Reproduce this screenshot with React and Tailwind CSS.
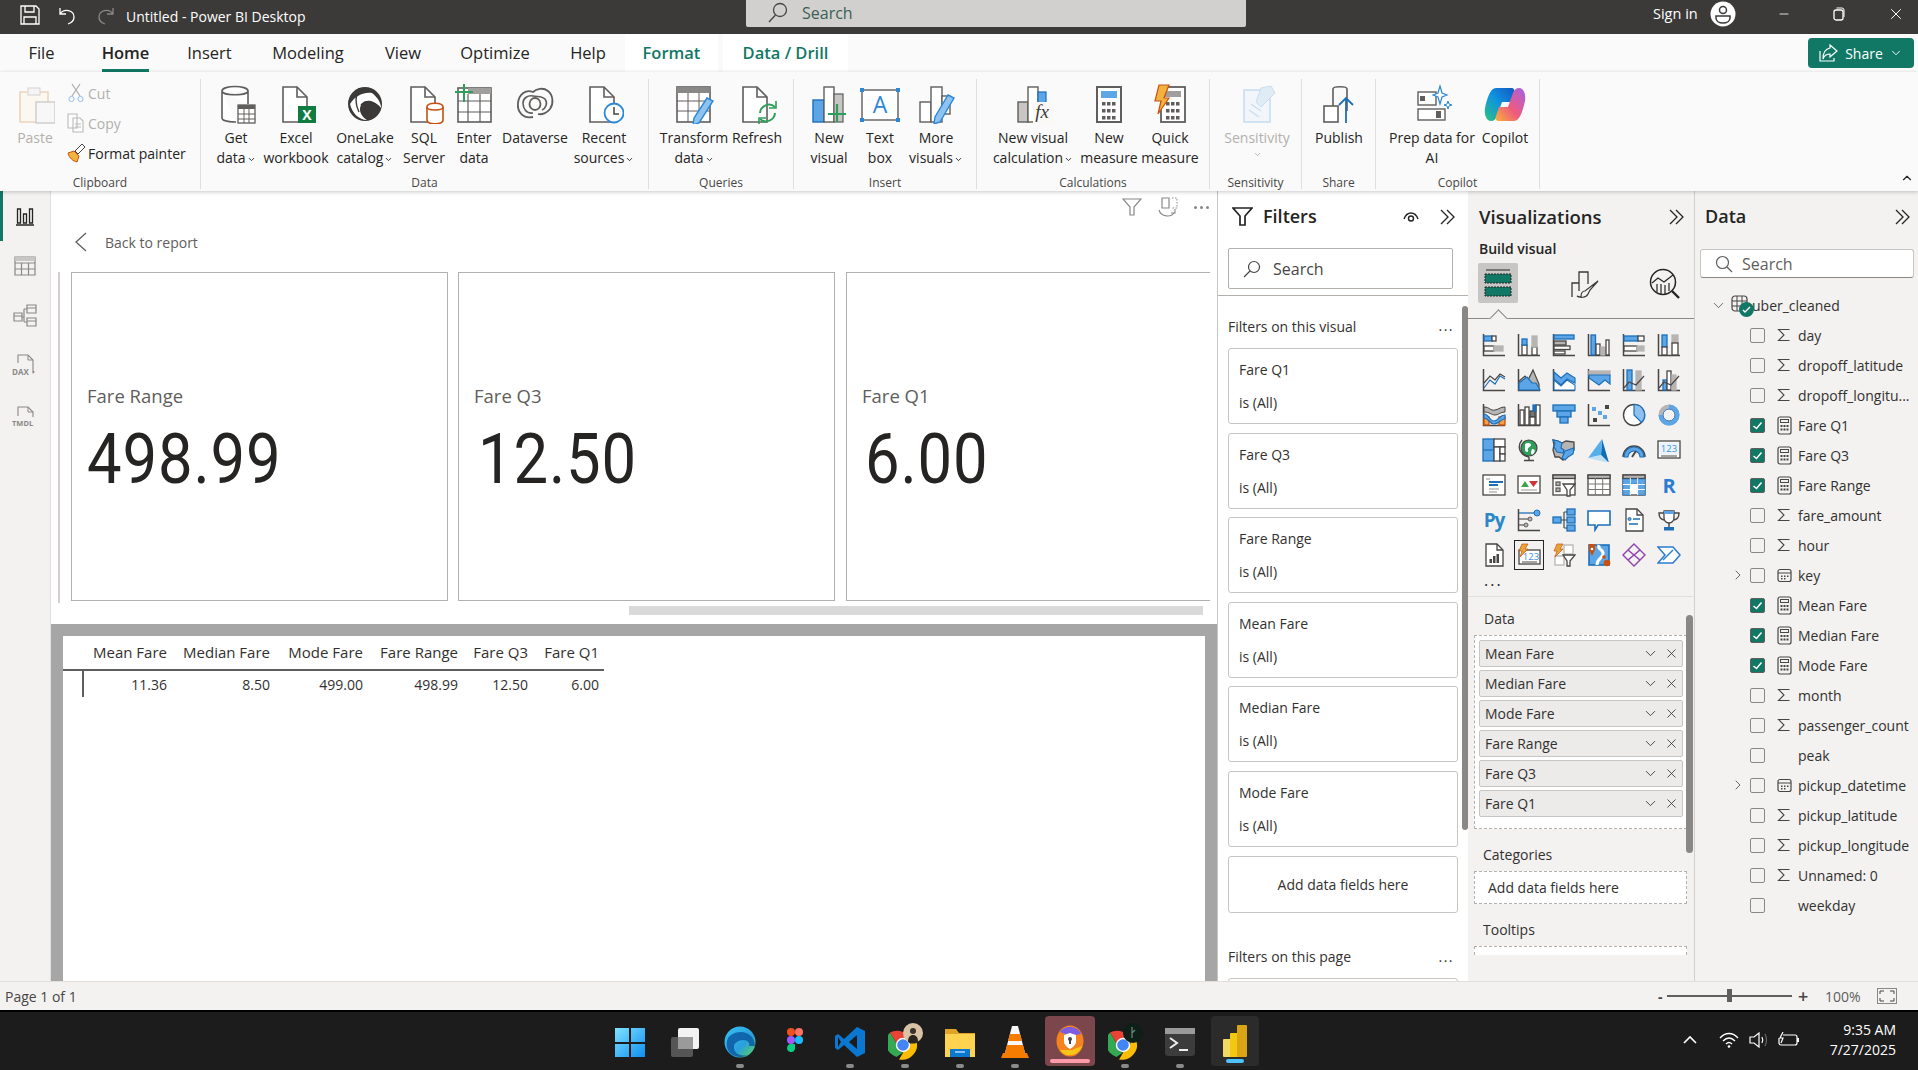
import React from 'react';
import { ChevronDown, ChevronRight, X, Minus } from 'lucide-react';

const D = '#484644', G = '#b7b5b3', B = '#5ca6e8', BD = '#1c6fb8', W = '#ffffff', S = '#605e5c';
const r = (x, y, w, h, f = 'none', s = D, sw = 1.3) => <rect x={x} y={y} width={w} height={h} fill={f} stroke={s} strokeWidth={sw} />;
const p = (d, s = D, sw = 1.4, f = 'none') => <path d={d} stroke={s} strokeWidth={sw} fill={f} />;

function I24({ children }) {
  return <svg width="24" height="24" viewBox="0 0 24 24" fill="none">{children}</svg>;
}
function I40({ children, disabled }) {
  return <svg width="40" height="40" viewBox="0 0 40 40" fill="none" className={disabled ? 'opacity-40' : ''}>{children}</svg>;
}
const axis = p('M1.5 1v21.5H23', D, 1.5);

const vizIcons = [
  <>{axis}{r(2, 3, 8, 5, B, BD)}{r(10, 3, 4, 5, W)}{r(2, 13, 10, 5, W)}{r(12, 13, 9, 5, G, G)}</>,
  <>{axis}{r(5, 12, 5, 10, W)}{r(5, 6, 5, 6, B, BD)}{r(15, 14, 5, 8, W)}{r(15, 3, 5, 11, G, G)}</>,
  <>{p('M1.5 1v21.5H23', D, 1.5)}{r(2, 2, 20, 4, B, BD)}{r(2, 8, 12, 4, G, D)}{r(2, 13, 16, 3.5, W)}{r(2, 18, 11, 3, W)}</>,
  <>{axis}{r(4, 2, 4.5, 20, B, BD)}{r(9, 11, 4, 11, W)}{r(14, 14, 4, 8, G, G)}{r(19, 7, 3, 15, W)}</>,
  <>{axis}{r(2, 3, 14, 5, B, BD)}{r(16, 3, 6, 5, W)}{r(2, 13, 13, 5, W)}{r(15, 13, 7, 5, G, G)}</>,
  <>{axis}{r(5, 2, 5, 12, B, BD)}{r(5, 14, 5, 8, W)}{r(15, 2, 6, 8, G, G)}{r(15, 10, 6, 12, W)}</>,
  <>{axis}{p('M2 15l6-7 5 4 5-6 5 3', D, 1.2)}{p('M2 20l6-8 5 4 5-8 5 3', BD, 1.2)}</>,
  <>{axis}{p('M2 22V13l6-5 3 4 5-10 6 14v6z', D, 1.2, G)}{p('M2 22v-7l8-6 5 6 4 0 4 7z', BD, 1.2, B)}</>,
  <>{axis}{p('M2 4l7 6 6-5 8 5v5l-8-4-6 6-7-6z', BD, 1.2, B)}{p('M2 12l7 6 6-6 8 5v5H2z', BD, 1.1, W)}</>,
  <>{axis}{r(2, 3, 21, 4, G, G)}{p('M2 7h21v9l-5-4-6 5-10-7z', BD, 1.2, B)}</>,
  <>{axis}{r(5, 2, 5, 20, B, BD)}{r(14, 3, 5, 19, G, G)}{p('M2 20l5-6 7 3 8-9', D, 1.2)}</>,
  <>{axis}{r(6, 12, 4, 10, B, BD)}{r(10, 3, 4, 19, W)}{r(15, 7, 4, 15, G, G)}{p('M2 20l5-6 7 3 8-9', D, 1.2)}</>,
  <>{axis}{p('M2 4c6 0 6 4 11 3s5-3 10-3v5c-5 0-6 3-10 3S8 9 2 9z', D, 1, G)}{r(2, 14, 5, 8, '#f59e42', '#ca5010')}{r(17, 14, 6, 8, '#f59e42', '#ca5010')}{p('M2 11c5 0 5 7 10 7s5-6 11-6v4c-5 0-6 5-11 5S7 15 2 15z', BD, 1.2, B)}</>,
  <>{axis}{r(3, 7, 4, 15, W)}{r(8, 4, 4, 18, W)}{r(13, 8, 5, 6, '#787674', D)}{r(19, 2, 4, 20, W)}{r(13, 14, 5, 8, W)}{r(16, 2, 3, 6, BD, BD)}</>,
  <>{r(1, 2, 22, 6, B, BD)}{r(5, 8, 14, 6, B, BD)}{r(8, 14, 8, 6, B, BD)}</>,
  <>{axis}<rect x="5" y="4" width="4" height="4" fill={B} /><rect x="18" y="2" width="4" height="4" fill={D} /><rect x="11" y="8" width="4" height="4" fill={B} /><rect x="6" y="15" width="4" height="4" fill={D} /><rect x="16" y="12" width="4" height="4" fill={B} /></>,
  <><circle cx="12" cy="12" r="10.5" fill={W} stroke={D} strokeWidth="1.4" />{p('M12 1.5a10.5 10.5 0 0 1 7.5 18L12 12z', BD, 1.2, '#8cc0ee')}</>,
  <><circle cx="12" cy="12" r="8.5" stroke="#b7b5b3" strokeWidth="4" />{p('M3.5 12a8.5 8.5 0 1 0 8.5-8.5', B, 4)}<circle cx="12" cy="12" r="6" stroke={BD} strokeWidth="1" /></>,
  <>{r(1, 1, 11, 22, B, BD)}{r(12, 1, 11, 8, W, D)}{r(12, 9, 6, 14, W, D)}{r(18, 9, 5, 7, W, D)}{r(18, 16, 5, 7, W, D)}<path d="M1 12h11" stroke={BD} strokeWidth="1.2" /></>,
  <><circle cx="12" cy="10" r="8" fill="#2e9e5b" stroke={D} strokeWidth="1.2" /><path d="M8 6c3-2 6-1 6 1s-4 2-3 5-3 2-3 0z M15 11c2 0 4 1 2 4s-3 1-3-1z" fill="#fff" />{p('M5 2c-5 6-3 15 7 17M12 19v3M7 22.5h10', D, 1.4)}</>,
  <>{p('M1 2l5 1 4 2 4-2 8 1v8l-3 4-5 2-3 4-4-3-4 0-2-7 1-5z', D, 1.3, G)}{p('M1 2l5 1 4 2-1 5 3 2-1 3-6-1-3-5 1-4z', BD, 1.2, B)}{p('M13 13l9-3-1 6-5 3-3 3-3-2z', BD, 1.2, B)}</>,
  <><path d="M15 1L22 25 14 17z" fill="#0e6cb8" /><path d="M15 1L1 20l13-3z" fill="#55b0ea" /><path d="M1 20l13-3 8 8z" fill="#a8d7f5" opacity=".7" /></>,
  <>{p('M1 19a11 11 0 0 1 22 0', D, 1.4)}{p('M2 19h4a6 6 0 0 1 12 0h4a10 10 0 0 0-20 0z', BD, 1.1, B)}{p('M10 19l4-6', D, 2)}</>,
  <>{r(1, 3, 22, 17, W, D)}{r(3, 5, 18, 11, '#eaf3fb', '#eaf3fb')}<text x="12" y="14" fontSize="9.5" textAnchor="middle" fill="#3f8fdc" fontFamily="Open Sans, sans-serif">123</text>{p('M4 18h16', D, 1)}</>,
  <>{r(1, 2, 22, 20, W, D)}{p('M4 6h4', G, 1.5)}{p('M7 9h14M7 12h9', BD, 1.8)}{p('M7 16h10M7 19h8', G, 1.5)}</>,
  <>{r(1, 3, 22, 17, W, D)}<path d="M4 14l4-6 4 6z" fill="#3fa34d" /><path d="M12 8h9l-4.5 6z" fill="#d13438" />{p('M4 17h16', G, 1.4)}</>,
  <>{r(1, 2, 22, 20, W, D)}{r(1, 2, 22, 3.5, G, D)}{r(4, 9, 4, 3.5, G, S)}{r(4, 15, 4, 3.5, G, S)}<path d="M11 11h12l-5 6v6h-3v-6z" fill="#fff" stroke={D} strokeWidth="1.3" /></>,
  <>{r(1, 2, 22, 20, W, D)}{r(1, 2, 22, 3.5, G, D)}{p('M1 11h22M1 16.5h22M8.3 5v17M15.7 5v17', '#787674', 1)}</>,
  <>{r(1, 2, 22, 20, W, D)}{r(1, 2, 22, 3.5, G, D)}{r(1, 6, 7, 16, B, BD, 0.5)}{r(16, 6, 7, 16, B, BD, 0.5)}{r(8, 6, 8, 5, B, BD, 0.5)}{p('M1 11.5h22M1 16.5h22M8.3 5v17M15.7 5v17', W, 1)}</>,
  <text x="12" y="20" fontSize="20" fontWeight="700" textAnchor="middle" fill="#2b7cd3" fontFamily="Open Sans, sans-serif">R</text>,
  <text x="12" y="19" fontSize="19" fontWeight="700" textAnchor="middle" fill="#2b88c8" fontFamily="Open Sans, sans-serif" letterSpacing="-1">Py</text>,
  <>{axis}{p('M2 5h15', BD, 1.3)}<circle cx="20" cy="5" r="3" fill={B} stroke={BD} />{p('M2 11h10', S, 1.3)}<circle cx="13" cy="11" r="2" fill={G} stroke={S} />{p('M2 17h6', S, 1.3)}<circle cx="9" cy="17" r="2" fill={G} stroke={S} /></>,
  <>{r(1, 9, 8, 6, B, BD)}{r(15, 1, 8, 6, B, BD)}{r(15, 9, 8, 6, B, BD)}{r(15, 17, 8, 6, B, BD)}{p('M9 12h3M12 4v16M12 4h3M12 12h3M12 20h3', D, 1.2)}</>,
  <>{p('M1 3h22v14H11l-3 5v-5H1z', BD, 1.6, W)}</>,
  <>{p('M4 1h11l6 6v16H4z', D, 1.3, W)}{p('M15 1v6h6', D, 1.3)}<circle cx="7.5" cy="11" r="1.5" fill={B} stroke={BD} />{p('M11 11h7M7 16h9', BD, 1.4)}</>,
  <>{p('M7 3h10v7a5 5 0 0 1-10 0z', D, 1.3, W)}<rect x="7" y="3" width="10" height="3" fill={B} />{p('M7 5H2c0 5 2 6 5 7M17 5h5c0 5-2 6-5 7M12 15v4', D, 1.4)}<rect x="7" y="19" width="10" height="3.5" fill={BD} /></>,
  <>{p('M4 1h11l6 6v16H4z', D, 1.3, W)}{p('M15 1v6h6', D, 1.3)}<rect x="7.5" y="16" width="2.5" height="4" fill={D} /><rect x="11" y="13" width="2.5" height="7" fill={D} /><rect x="14.5" y="11" width="2.5" height="9" fill={D} /></>,
  <>{r(2, 7, 21, 14, W, D)}<text x="14" y="17" fontSize="9.5" textAnchor="middle" fill="#3f8fdc" fontFamily="Open Sans, sans-serif">123</text>{p('M5 19h15', D, 1)}<path d="M5 1h6L8 6h3L3 14l2-6H2z" fill="#e8a33a" stroke="#ca5010" strokeWidth=".7" /></>,
  <>{r(12, 2, 9, 9, W, G)}{r(3, 13, 9, 9, W, G)}<path d="M11 12h12l-5 6v5h-3v-5z" fill="#fff" stroke={D} strokeWidth="1.3" /><path d="M5 1h6L8 6h3L3 14l2-6H2z" fill="#e8a33a" stroke="#ca5010" strokeWidth=".7" /></>,
  <>{r(2, 2, 20, 20, B, BD, 1.6)}{p('M12 2c-2 5 5 4 4 9s-6 4-6 11', W, 3)}<path d="M2 1h6v6l-3 6-3-6z" fill="#ca5010" /><circle cx="5" cy="6" r="1.3" fill="#fff" /><circle cx="20" cy="20" r="3.3" fill="#ca5010" /><circle cx="17" cy="14" r="1.8" fill="#ca5010" /></>,
  <>{p('M12 1l6 6-6 5-6-5zM12 12l6 5-6 6-6-6zM6 7l6 5-6 5-5-5zM18 7l5 5-5 5-6-5z', '#8e44ad', 1.4)}</>,
  <>{p('M1 4h15l7 8-7 8H1l7-8z', '#2b7cd3', 1.5, W)}{p('M6 17l10-10', '#2b7cd3', 1.5)}</>,
];

function Tab({ className, label, active, green }) {
  return (
    <div className={`${className} h-full flex justify-center ${green ? 'bg-white' : ''}`}>
      <span className={`h-full flex items-center text-[16.5px] ${green ? 'font-semibold text-[#117865]' : active ? 'font-semibold text-[#252423] border-b-[3px] border-[#117865] pt-[3px]' : 'text-[#252423]'}`}>{label}</span>
    </div>
  );
}

function Group({ className, label, children, pl = 'pl-[8px]' }) {
  return (
    <div className={`${className} h-full border-r border-[#e1dfdd] flex flex-col`}>
      <div className={`flex-1 flex items-start pt-[5px] ${pl}`}>{children}</div>
      <div className="h-[13px] flex items-center justify-center text-[12px] text-[#484644]">{label}</div>
    </div>
  );
}

function Item({ className, icon, l1, l2, caret, disabled }) {
  const c = disabled ? 'text-[#b3b0ad]' : 'text-[#252423]';
  return (
    <div className={`${className} flex flex-col items-center ${c} text-[14px] leading-[20px] whitespace-nowrap shrink-0`}>
      <div className="h-[40px] mb-[4px]">{icon}</div>
      <div>{l1}</div>
      {(l2 || caret) && (
        <div className="flex items-center gap-[1px]">
          <span>{l2}</span>
          {caret && <ChevronDown size={9} strokeWidth={2.4} className="mt-[2px]" />}
        </div>
      )}
    </div>
  );
}

const doc = (x = 7) => <>{p(`M${x} 3h14l10 10v25H${x}z`, S, 1.6, W)}{p(`M${x + 14} 3v10h10`, S, 1.6)}</>;

const icons = {
  paste: <I40 disabled><path d="M5 8h28v30H5z" fill="#fdf3e4" stroke="#d8a060" strokeWidth="1.6" /><rect x="13" y="4" width="12" height="7" fill="#eee" stroke="#999" /><rect x="21" y="18" width="19" height="21" fill="#f4f4f4" stroke="#888" strokeWidth="1.4" /></I40>,
  get: <I40>{p('M6 7c0-6 26-6 26 0v13M6 7c0 5 26 5 26 0M6 7v27c0 3 8 4 14 4', S, 1.6, W)}{r(22, 21, 17, 18, W, S, 1.3)}<rect x="22" y="21" width="17" height="4" fill={S} />{p('M22 30h17M22 35h17M28 25v14M33 25v14', S, 1)}</I40>,
  excel: <I40>{doc(7)}<rect x="22" y="22" width="18" height="17" fill="#107c41" /><text x="31" y="36" textAnchor="middle" fontSize="14" fontWeight="700" fill="#fff" fontFamily="Open Sans, sans-serif">X</text></I40>,
  lake: <I40><circle cx="20" cy="20" r="17" fill="#3b3a39" /><path d="M5 20c6-9 14-12 22-11 5 4 9 9 9 15-8-9-16-9-20-3-3 6 1 12 6 15-8 0-15-7-17-16z" fill="#fff" /><path d="M16 21c5-5 12-4 19 3" stroke="#3b3a39" strokeWidth="1.6" /><path d="M14 4c-4 8-4 16 0 24" stroke="#3b3a39" strokeWidth="1.4" /></I40>,
  sql: <I40>{doc(7)}<path d="M23 23c0-5 16-5 16 0v13c0 5-16 5-16 0z" fill="#fff" stroke="#ca5010" strokeWidth="1.6" /><path d="M23 23c0 4 16 4 16 0" stroke="#ca5010" strokeWidth="1.6" /></I40>,
  enter: <I40>{r(4, 4, 33, 34, W, S, 1.6)}<rect x="14" y="4" width="23" height="6" fill="#a19f9d" />{p('M4 17h33M4 28h33M14 10v28M26 10v28', S, 1.2)}{p('M10 0v18M1 8h18', '#2e9e5b', 2)}</I40>,
  verse: <I40><path d="M18 33C8 35 2 28 3 19 4 10 11 5 18 8c3-3 10-5 15-1 5 4 6 12 2 18-3 4-8 6-12 5" stroke={S} strokeWidth="1.8" /><path d="M18 29C11 30 8 24 8 19s5-8 10-7c5 1 9 0 12 3 3 4 1 9-3 11" stroke={S} strokeWidth="1.6" /><ellipse cx="20" cy="20" rx="5.5" ry="6" stroke={S} strokeWidth="1.8" /></I40>,
  recent: <I40>{doc(6)}<circle cx="30" cy="29" r="9.5" fill="#fff" stroke="#2b88d8" strokeWidth="1.8" />{p('M30 23v7h5', '#484644', 1.5)}</I40>,
  transform: <I40>{r(3, 3, 33, 35, W, S, 1.6)}<rect x="3" y="3" width="33" height="6" fill="#8a8886" />{p('M3 17h33M3 27h33M14 9v29M25 9v29', S, 1)}<path d="M33 14l6 3-14 22-6 2 1-7z" fill="#8ec3ef" stroke="#2b88d8" strokeWidth="1.4" /></I40>,
  refresh: <I40>{doc(6)}<path d="M23 29a9 9 0 0 1 15-6M38 29a9 9 0 0 1-15 6" stroke="#2e9e5b" strokeWidth="2" fill="none" /><path d="M39 17v7h-7M22 41v-7h7" stroke="#2e9e5b" strokeWidth="1.6" fill="none" /></I40>,
  newVisual: <I40>{r(4, 16, 11, 22, '#5ca6e8', '#1c6fb8', 1.4)}{r(15, 3, 10, 35, W, S, 1.4)}{r(25, 10, 9, 28, '#c8c6c4', S, 1.2)}{p('M28 20v18M19 30h18', '#2e9e5b', 2.2)}</I40>,
  textBox: <I40>{r(2, 6, 36, 30, W, S, 1.4)}<rect x="0" y="4" width="4" height="4" fill="#2b88d8" /><rect x="36" y="4" width="4" height="4" fill="#2b88d8" /><rect x="0" y="34" width="4" height="4" fill="#2b88d8" /><rect x="36" y="34" width="4" height="4" fill="#2b88d8" /><text x="20" y="29" textAnchor="middle" fontSize="23" fill="#2b88d8" fontFamily="Open Sans, sans-serif">A</text></I40>,
  moreVisuals: <I40>{r(4, 18, 11, 20, W, S, 1.4)}{r(15, 3, 11, 35, W, S, 1.4)}{r(26, 12, 8, 18, W, S, 1.4)}<path d="M32 11l6 3-14 24-6 2 1-7z" fill="#8ec3ef" stroke="#2b88d8" strokeWidth="1.4" /></I40>,
  calc: <I40>{r(5, 18, 10, 20, '#c8c6c4', S, 1.4)}{r(15, 3, 10, 35, W, S, 1.4)}{r(25, 8, 8, 14, '#5ca6e8', '#1c6fb8', 1.2)}<rect x="20" y="18" width="20" height="22" fill="#faf9f8" /><text x="29" y="34" textAnchor="middle" fontSize="19" fontStyle="italic" fill="#3b3a39" fontFamily="Liberation Serif, serif">fx</text></I40>,
  measure: <I40>{r(8, 3, 24, 35, W, S, 2)}<rect x="12" y="7" width="16" height="7" fill="#5ca6e8" />{[18, 25, 32].map((y) => [13, 18, 23].map((x) => <rect key={x + '-' + y} x={x} y={y} width="3.5" height="3.5" fill={S} />))}</I40>,
  quick: <I40>{r(11, 3, 24, 35, W, S, 1.8)}<rect x="15" y="7" width="16" height="6" fill="#a19f9d" />{[18, 25, 32].map((y) => [16, 21, 26].map((x) => <rect key={x + '-' + y} x={x} y={y} width="3.5" height="3.5" fill={S} />))}<path d="M9 1h10l-5 13h5L8 30l3-13H5z" fill="#f2b23e" stroke="#ca5010" strokeWidth="1.2" /></I40>,
  sens: <I40 disabled><rect x="7" y="6" width="26" height="32" fill="#e8f2fb" stroke="#7fb3e0" strokeWidth="1.6" /><path d="M24 4l10-2 4 7-14 14-5-5z" fill="#b9d8f2" stroke="#7fb3e0" />{p('M12 26l10 7M14 20l10 7', '#7fb3e0', 1.4)}</I40>,
  publish: <I40>{r(5, 22, 14, 16, W, S, 1.6)}{p('M14 22V5c0-3 14-3 14 0v22', S, 1.6)}{p('M27 39V14M20 21l7-7 7 7', '#1c6fb8', 1.8)}</I40>,
  prep: <I40>{r(6, 8, 18, 13, W, S, 1.4)}<rect x="8" y="12" width="5" height="5" fill={S} />{r(6, 25, 27, 11, W, S, 1.4)}<rect x="24" y="27" width="5" height="7" fill={S} /><path d="M28 2l2 7 5 2-5 2-2 7-2-7-5-2 5-2z" fill="#fff" stroke="#2b88d8" strokeWidth="1.2" /><path d="M36 17l1 3 3 1-3 1-1 3-1-3-3-1 3-1z" fill="#fff" stroke="#2b88d8" /></I40>,
  copilot: (
    <svg width="42" height="40" viewBox="0 0 42 40" fill="none">
      <defs>
        <linearGradient id="cpa" x1="0" y1="1" x2="1" y2="0"><stop offset="0" stopColor="#2ec27e" /><stop offset=".5" stopColor="#0f94e0" /><stop offset="1" stopColor="#1257c4" /></linearGradient>
        <linearGradient id="cpb" x1="0" y1="1" x2="1" y2="0"><stop offset="0" stopColor="#f8b13a" /><stop offset=".45" stopColor="#ef5a7c" /><stop offset="1" stopColor="#a560e8" /></linearGradient>
      </defs>
      <path d="M12 4h15c3 0 4 2 3 5l-3 9h-9l-5 14c-1 3-3 5-6 5-5 0-7-7-6-13 2-9 5-20 11-20z" fill="url(#cpa)" />
      <path d="M30 37H15c-3 0-4-2-3-5l3-9h9l5-14c1-3 3-5 6-5 5 0 7 7 6 13-2 9-5 20-11 20z" fill="url(#cpb)" />
    </svg>
  ),
};

function Small({ icon, label, disabled }) {
  return (
    <div className={`h-[30px] flex items-center whitespace-nowrap text-[14px] ${disabled ? 'text-[#b3b0ad]' : 'text-[#252423]'}`}>
      <div className="w-[24px] flex justify-center">{icon}</div>
      <span>{label}</span>
    </div>
  );
}

const Dbl = () => (
  <svg width="16" height="16" viewBox="0 0 16 16" fill="none"><path d="M2 1l7 7-7 7M8 1l7 7-7 7" stroke="#252423" strokeWidth="1.3" /></svg>
);

function FilterCard({ name }) {
  return (
    <div className="h-[76px] mb-[8.6px] mr-[10px] bg-white border border-[#c8c6c4] rounded-[3px] pl-[10px] pt-[11px] text-[14px] text-[#323130] leading-[20px] shrink-0">
      <div>{name}</div>
      <div className="mt-[13px]">is (All)</div>
    </div>
  );
}

function Pill({ name, mb }) {
  return (
    <div className={`h-[27px] ${mb} bg-[#edebe9] border border-[#c8c6c4] rounded-[2px] flex items-center pl-[5px] pr-[3px] text-[14px] text-[#323130]`}>
      <span className="flex-1">{name}</span>
      <ChevronDown size={17} strokeWidth={1.2} className="mr-[5px]" />
      <X size={15} strokeWidth={1.3} />
    </div>
  );
}

const Sigma = () => <svg width="14" height="14" viewBox="0 0 14 14" fill="none"><path d="M12.5 1.5H1.5L7 7l-5.5 5.5h11" stroke="#484644" strokeWidth="1.1" /></svg>;
const CalcI = () => <svg width="15" height="19" viewBox="0 0 15 19" fill="none"><rect x="1" y="1" width="13" height="17" rx="2" stroke="#484644" strokeWidth="1.2" /><rect x="3.5" y="3.5" width="8" height="3" stroke="#484644" /><g fill="#484644"><rect x="3.5" y="9" width="2" height="2" /><rect x="6.5" y="9" width="2" height="2" /><rect x="9.5" y="9" width="2" height="2" /><rect x="3.5" y="12.5" width="2" height="2" /><rect x="6.5" y="12.5" width="2" height="2" /><rect x="9.5" y="12.5" width="2" height="2" /></g></svg>;
const CalI = () => <svg width="15" height="15" viewBox="0 0 15 15" fill="none"><rect x="1" y="1.5" width="13" height="12" rx="2" stroke="#484644" strokeWidth="1.2" /><path d="M1 5h13" stroke="#484644" /><g fill="#484644"><rect x="4" y="7.5" width="1.5" height="1.5" /><rect x="7" y="7.5" width="1.5" height="1.5" /><rect x="10" y="7.5" width="1.5" height="1.5" /><rect x="4" y="10" width="1.5" height="1.5" /><rect x="7" y="10" width="1.5" height="1.5" /></g></svg>;

function Row({ name, icon, checked, expand }) {
  return (
    <div className="h-[30px] shrink-0 flex items-center text-[14px] text-[#323130] whitespace-nowrap">
      <div className="w-[55px] pl-[35px] flex justify-start">{expand && <ChevronRight size={16} strokeWidth={1.2} className="text-[#484644]" />}</div>
      {checked ? (
        <div className="w-[15px] h-[15px] rounded-[2px] bg-[#117865] border border-[#605e5c] flex items-center justify-center">
          <svg width="11" height="11" viewBox="0 0 11 11" fill="none"><path d="M1.5 6l3 2.5 5-6" stroke="#fff" strokeWidth="1.5" /></svg>
        </div>
      ) : (
        <div className="w-[15px] h-[15px] rounded-[2px] border border-[#8a8886]" />
      )}
      <div className="w-[36px] pl-[2px] flex justify-center">{icon === 's' ? <Sigma /> : icon === 'c' ? <CalcI /> : icon === 't' ? <CalI /> : null}</div>
      <span className="-ml-[3px]">{name}</span>
    </div>
  );
}

const rows = [
  ['day', 's'], ['dropoff_latitude', 's'], ['dropoff_longitu...', 's'], ['Fare Q1', 'c', 1], ['Fare Q3', 'c', 1], ['Fare Range', 'c', 1],
  ['fare_amount', 's'], ['hour', 's'], ['key', 't', 0, 1], ['Mean Fare', 'c', 1], ['Median Fare', 'c', 1], ['Mode Fare', 'c', 1],
  ['month', 's'], ['passenger_count', 's'], ['peak', ''], ['pickup_datetime', 't', 0, 1], ['pickup_latitude', 's'], ['pickup_longitude', 's'], ['Unnamed: 0', 's'], ['weekday', ''],
];

function KpiCard({ className, label, value, vx }) {
  return (
    <div className={`${className} shrink-0 h-[329px] border-[1.5px] border-[#b3b0ad] pl-[15px] pt-[109px] bg-white`}>
      <div className="text-[18.5px] leading-[28px] text-[#605e5c]">{label}</div>
      <div className={`${vx} text-[70px] leading-[90px] mt-[4px] text-[#252423] font-['Roboto',sans-serif] origin-left scale-x-[0.88] tracking-[1px]`}>{value}</div>
    </div>
  );
}

const cols = [
  ['Mean Fare', '11.36', 'w-[109px]'], ['Median Fare', '8.50', 'w-[103px]'], ['Mode Fare', '499.00', 'w-[93px]'],
  ['Fare Range', '498.99', 'w-[95px]'], ['Fare Q3', '12.50', 'w-[70px]'], ['Fare Q1', '6.00', 'w-[71px]'],
];

function Task({ children, dot, className = '' }) {
  return (
    <div className={`w-[55px] h-[58px] flex flex-col items-center shrink-0 ${className}`}>
      <div className="h-[44px] mt-[8px] flex items-center justify-center">{children}</div>
      <div className="h-[6px] flex justify-center">{dot && <div className="w-[8px] h-[4px] rounded-full bg-[#8a8a8a]" />}</div>
    </div>
  );
}

const Chrome = ({ badge }) => (
  <svg width="36" height="38" viewBox="0 0 36 38" fill="none" className="ml-[3px]">
    <path d="M15 7a15 15 0 0 1 13 7.5H15a7.5 7.5 0 0 0-6.5 3.8L2 7.5A15 15 0 0 1 15 7z" fill="#ea4335" transform="translate(0 2)" />
    <path d="M2 9.5l6.5 11A7.5 7.5 0 0 0 15 29.5L8.5 34A15 15 0 0 1 2 9.5z" fill="#34a853" />
    <path d="M28 16.5a15 15 0 0 1-17 20l6-10a7.5 7.5 0 0 0 5-10z" fill="#fbbc05" />
    <circle cx="15" cy="22" r="6.5" fill="#4285f4" stroke="#fff" strokeWidth="1.4" />
    {badge === 'a' ? <g><circle cx="25" cy="10" r="10" fill="#d8c4a4" /><path d="M20 19c0-5 2-7 5-7s5 2 5 7c-3 2-7 2-10 0z" fill="#2a2420" /><circle cx="25" cy="8" r="3" fill="#3a3028" /></g> : <g><circle cx="25" cy="10" r="10" fill="#0d1f17" /><path d="M24 4v11M24 10l3-3" stroke="#6a8a7c" strokeWidth="1.2" /></g>}
  </svg>
);

export default function App() {
  return (
    <div className="w-[1918px] h-[1070px] overflow-hidden flex flex-col bg-white font-['Open_Sans',sans-serif]">
      {/* title bar */}
      <div className="h-[34px] shrink-0 bg-[#3b3a39] flex text-white">
        <div className="w-[746px] flex items-center pb-[5px]">
          <svg className="ml-[20px]" width="20" height="20" viewBox="0 0 20 20" fill="none"><path d="M1 1h15l3 3v15H1z" stroke="#fff" strokeWidth="1.3" /><path d="M5 1v6h9V1M4 19v-7h12v7" stroke="#fff" strokeWidth="1.3" /></svg>
          <svg className="ml-[18px]" width="20" height="20" viewBox="0 0 20 20" fill="none"><path d="M2 3v6h6M2 9c4-6 14-4 14 3 0 4-3 6-6 7" stroke="#fff" strokeWidth="1.3" /></svg>
          <svg className="ml-[17px]" width="20" height="20" viewBox="0 0 20 20" fill="none"><path d="M18 3v6h-6M18 9c-4-6-14-4-14 3 0 4 3 6 6 7" stroke="#8a8886" strokeWidth="1.3" /></svg>
          <span className="ml-[11px] text-[14px] pt-[3px]">Untitled - Power BI Desktop</span>
        </div>
        <div className="w-[500px] h-[27px] bg-[#d2d0ce] rounded-b-[2px] flex items-center pl-[21px] text-[#3b5f55] text-[16px] pb-[2px]">
          <svg width="22" height="22" viewBox="0 0 22 22" fill="none"><circle cx="13" cy="8" r="6.5" stroke="#484644" strokeWidth="1.3" /><path d="M8.5 13L2 20" stroke="#484644" strokeWidth="1.4" /></svg>
          <span className="ml-[13px]">Search</span>
        </div>
        <div className="flex-1 flex items-center pl-[407px] text-[14.5px] pb-[6px]">
          <span>Sign in</span>
          <svg className="ml-[12px]" width="26" height="26" viewBox="0 0 26 26" fill="none"><circle cx="13" cy="13" r="12.5" fill="#fff" /><circle cx="13" cy="9" r="3.5" stroke="#3b3a39" strokeWidth="1.5" /><path d="M6 15h14v2c0 3-3 5-7 5s-7-2-7-5z" stroke="#3b3a39" strokeWidth="1.5" /></svg>
          <Minus size={14} strokeWidth={1.4} className="ml-[41px]" />
          <svg className="ml-[42px]" width="12" height="14" viewBox="0 0 12 14" fill="none"><rect x="1" y="3" width="9" height="10" rx="2" stroke="#fff" strokeWidth="1.3" /><path d="M3.5 1H9a2 2 0 0 1 2 2v7" stroke="#fff" /></svg>
          <X size={18} strokeWidth={1.3} className="ml-[42px]" />
        </div>
      </div>

      {/* tabs */}
      <div className="h-[38px] shrink-0 bg-[#fafafa] flex items-center pl-[12px]">
        <Tab className="w-[59px]" label="File" />
        <Tab className="w-[109px]" label="Home" active />
        <Tab className="w-[59px]" label="Insert" />
        <Tab className="w-[138px]" label="Modeling" />
        <Tab className="w-[52px]" label="View" />
        <Tab className="w-[132px]" label="Optimize" />
        <Tab className="w-[54px]" label="Help" />
        <Tab className="w-[93px] ml-[10px]" label="Format" green />
        <Tab className="w-[125px] ml-[5px]" label="Data / Drill" green />
        <div className="ml-auto mr-[4px] w-[106px] h-[30px] rounded-[4px] bg-[#117865] text-white text-[14px] flex items-center justify-center gap-[6px]">
          <svg width="20" height="20" viewBox="0 0 20 20" fill="none"><path d="M11 2l7 6-7 6v-3c-4 0-6 2-7 5 0-6 2-10 7-11zM1 8v10h14v-3" stroke="#fff" strokeWidth="1.2" /></svg>
          <span>Share</span>
          <ChevronDown size={14} strokeWidth={1.6} />
        </div>
      </div>

      {/* ribbon */}
      <div className="h-[119px] shrink-0 bg-[#fafafa] pt-[7px] pb-[2px] flex relative z-10 shadow-[0_1px_4px_rgba(0,0,0,0.22)]">
        <Group className="w-[201px]" label="Clipboard" pl="pl-[10px]">
          <div className="w-[50px] flex flex-col items-center text-[14px] leading-[20px] text-[#b3b0ad]">
            <div className="h-[40px] mb-[4px]">{icons.paste}</div>
            <div>Paste</div>
          </div>
          <div className="-mt-[6px] ml-[4px]">
            <Small disabled label="Cut" icon={<svg width="18" height="20" viewBox="0 0 18 20" fill="none" className="opacity-50"><path d="M5 1l8 12M13 1L5 13" stroke="#605e5c" strokeWidth="1.2" /><circle cx="4.5" cy="16" r="2.6" stroke="#2b88d8" /><circle cx="13.5" cy="16" r="2.6" stroke="#2b88d8" /></svg>} />
            <Small disabled label="Copy" icon={<svg width="18" height="20" viewBox="0 0 18 20" fill="none" className="opacity-40"><path d="M1 1h9v14H1zM6 5h7l3 3v11H6z" fill="#fff" stroke="#605e5c" strokeWidth="1.1" /><path d="M8 11h6M8 14h6" stroke="#605e5c" /></svg>} />
            <Small label="Format painter" icon={<svg width="20" height="20" viewBox="0 0 20 20" fill="none"><path d="M2 10l6-2 5 5-2 6C7 18 3 15 2 10z" fill="#f2b23e" stroke="#ca5010" /><path d="M9 8l7-7 3 3-7 7z" fill="#fff" stroke="#484644" /></svg>} />
          </div>
        </Group>
        <Group className="w-[448px]" label="Data" pl="pl-[7px]">
          <Item className="w-[56px]" icon={icons.get} l1="Get" l2="data" caret />
          <Item className="w-[64px]" icon={icons.excel} l1="Excel" l2="workbook" />
          <Item className="w-[74px]" icon={icons.lake} l1="OneLake" l2="catalog" caret />
          <Item className="w-[44px]" icon={icons.sql} l1="SQL" l2="Server" />
          <Item className="w-[56px]" icon={icons.enter} l1="Enter" l2="data" />
          <Item className="w-[66px]" icon={icons.verse} l1="Dataverse" />
          <Item className="w-[72px]" icon={icons.recent} l1="Recent" l2="sources" caret />
        </Group>
        <Group className="w-[145px]" label="Queries" pl="pl-[9px]">
          <Item className="w-[72px]" icon={icons.transform} l1="Transform" l2="data" caret />
          <Item className="w-[54px]" icon={icons.refresh} l1="Refresh" />
        </Group>
        <Group className="w-[183px]" label="Insert" pl="pl-[10px]">
          <Item className="w-[50px]" icon={icons.newVisual} l1="New" l2="visual" />
          <Item className="w-[52px]" icon={icons.textBox} l1="Text" l2="box" />
          <Item className="w-[60px]" icon={icons.moreVisuals} l1="More" l2="visuals" caret />
        </Group>
        <Group className="w-[233px]" label="Calculations">
          <Item className="w-[96px]" icon={icons.calc} l1="New visual" l2="calculation" caret />
          <Item className="w-[56px]" icon={icons.measure} l1="New" l2="measure" />
          <Item className="w-[66px]" icon={icons.quick} l1="Quick" l2="measure" />
        </Group>
        <Group className="w-[92px]" label="Sensitivity" pl="pl-[10px]">
          <Item className="w-[74px]" icon={icons.sens} l1="Sensitivity" caret disabled />
        </Group>
        <Group className="w-[74px]" label="Share">
          <Item className="w-[58px]" icon={icons.publish} l1="Publish" />
        </Group>
        <Group className="w-[164px]" label="Copilot">
          <Item className="w-[96px]" icon={icons.prep} l1="Prep data for" l2="AI" />
          <Item className="w-[50px]" icon={icons.copilot} l1="Copilot" />
        </Group>
        <div className="flex-1 flex items-end justify-end pr-[4px]">
          <ChevronDown size={14} strokeWidth={2} className="rotate-180 mb-[4px] text-[#252423]" />
        </div>
      </div>

      {/* main */}
      <div className="h-[790px] shrink-0 flex">
        {/* rail */}
        <div className="w-[51px] shrink-0 bg-[#f3f2f1] border-r border-[#e1dfdd] flex flex-col">
          <div className="h-[50px] flex items-center justify-center border-l-[3px] border-[#117865] pr-[3px]">
            <svg width="20" height="20" viewBox="0 0 20 20" fill="none"><path d="M1 19h18" stroke="#252423" strokeWidth="1.5" /><path d="M2.5 3h3v14h-3zM8.5 8h3v9h-3zM14.5 3h3v14h-3z" stroke="#252423" strokeWidth="1.3" /></svg>
          </div>
          <div className="h-[50px] flex items-center justify-center">
            <svg width="22" height="20" viewBox="0 0 22 20" fill="none"><path d="M1 1h20v18H1zM1 7h20M1 13h20M7.5 7v12M14.5 7v12" stroke="#8a8886" strokeWidth="1.2" /><rect x="1" y="1" width="20" height="4" fill="#c8c6c4" /></svg>
          </div>
          <div className="h-[50px] flex items-center justify-center">
            <svg width="24" height="24" viewBox="0 0 24 24" fill="none"><path d="M1 9h8v8H1zM1 12h8M14 1h9v8h-9zM14 4h9M14 14h9v8h-9zM14 17h9M9 13h2M11 5v13M11 5h3M11 18h3" stroke="#8a8886" strokeWidth="1.2" /></svg>
          </div>
          <div className="h-[50px] flex items-center justify-center">
            <svg width="26" height="26" viewBox="0 0 26 26" fill="none"><path d="M6 10V2h10l5 5v13c1 0 1-1 1-2" stroke="#8a8886" strokeWidth="1.1" /><path d="M16 2v5h5" stroke="#8a8886" /><text x="0" y="22" fontSize="8" fontWeight="700" fill="#8a8886" fontFamily="Open Sans, sans-serif">DAX</text></svg>
          </div>
          <div className="h-[50px] flex items-center justify-center pt-[3px]">
            <svg width="26" height="26" viewBox="0 0 26 26" fill="none"><path d="M6 11V2h10l5 5v5" stroke="#8a8886" strokeWidth="1.1" /><path d="M16 2v5h5" stroke="#8a8886" /><text x="0" y="21" fontSize="7.5" fontWeight="700" fill="#8a8886" fontFamily="Open Sans, sans-serif">TMDL</text></svg>
          </div>
        </div>

        {/* canvas */}
        <div className="w-[1166px] shrink-0 flex flex-col bg-white relative">
          <div className="h-[32px] flex items-center justify-end pr-[4px] gap-[15px] shrink-0">
            <svg width="20" height="20" viewBox="0 0 20 20" fill="none"><path d="M1 2h18l-7 8v8h-4v-8z" stroke="#8a8886" strokeWidth="1.2" /></svg>
            <svg width="22" height="22" viewBox="0 0 22 22" fill="none"><path d="M5 12V2h7v10z" stroke="#8a8886" strokeWidth="1.2" /><path d="M15 2h5v10h-5" stroke="#8a8886" strokeDasharray="1.5 1.5" /><path d="M2 14c2 7 12 8 16 2M18 13v4h-4" stroke="#8a8886" strokeWidth="1.1" /></svg>
            <div className="flex gap-[3px] items-center w-[19px]">
              <i className="w-[3px] h-[3px] rounded-full bg-[#8a8886]" /><i className="w-[3px] h-[3px] rounded-full bg-[#8a8886]" /><i className="w-[3px] h-[3px] rounded-full bg-[#8a8886]" />
            </div>
          </div>
          <div className="h-[49px] shrink-0 flex items-center pl-[23px] pb-[11px] text-[14px] text-[#605e5c]">
            <svg width="14" height="22" viewBox="0 0 14 22" fill="none"><path d="M12 2L2 11l10 9" stroke="#605e5c" strokeWidth="1.3" /></svg>
            <span className="ml-[17px]">Back to report</span>
          </div>
          <div className="h-[331px] shrink-0 flex pl-[7px] mr-[7px] overflow-hidden">
            <div className="w-[2px] h-[331px] bg-[#d2d0ce] shrink-0 mr-[11px]" />
            <KpiCard className="w-[377px] mr-[10px]" label="Fare Range" value="498.99" vx="" />
            <KpiCard className="w-[377px] mr-[11px]" label="Fare Q3" value="12.50" vx="ml-[4px]" />
            <KpiCard className="w-[377px]" label="Fare Q1" value="6.00" vx="ml-[3px]" />
          </div>
          <div className="h-[21px] shrink-0 pl-[578px] pt-[3px]">
            <div className="w-[574px] h-[9px] bg-[#d9d9d9]" />
          </div>
          <div className="flex-1 min-h-0 bg-[#a6a6a6] pt-[12px] px-[12px]">
            <div className="h-full bg-white">
              <div className="w-[541px]">
                <div className="flex h-[35px] border-b-[2px] border-[#605e5c] items-center text-[15px] text-[#323130] whitespace-nowrap">
                  {cols.map((c) => <div key={c[0]} className={`${c[2]} text-right pr-[5px]`}>{c[0]}</div>)}
                </div>
                <div className="flex h-[26px] items-center text-[14px] text-[#323130] relative">
                  <div className="absolute left-[19px] top-0 w-[1.5px] h-[26px] bg-[#605e5c]" />
                  {cols.map((c) => <div key={c[0]} className={`${c[2]} text-right pr-[5px]`}>{c[1]}</div>)}
                </div>
              </div>
            </div>
          </div>
        </div>

        {/* filters */}
        <div className="w-[251px] shrink-0 bg-white border-l border-[#c8c6c4] flex flex-col relative overflow-hidden">
          <div className="h-[50px] flex items-center pl-[14px] shrink-0 pt-[1px]">
            <svg width="21" height="21" viewBox="0 0 21 21" fill="none"><path d="M1 2h19l-7 8v9h-5v-9z" stroke="#252423" strokeWidth="1.7" /></svg>
            <span className="ml-[10px] text-[18px] font-semibold text-[#252423]">Filters</span>
            <svg className="ml-[86px]" width="16" height="12" viewBox="0 0 16 12" fill="none"><path d="M1 8c3-8 11-8 14 0" stroke="#252423" strokeWidth="1.4" /><circle cx="8" cy="7.5" r="2.5" stroke="#252423" strokeWidth="1.4" /></svg>
            <span className="ml-[20px]"><Dbl /></span>
          </div>
          <div className="pl-[10px] shrink-0 mt-[7px]">
            <div className="w-[225px] h-[41px] border border-[#b3b0ad] rounded-[2px] flex items-center pl-[13px] text-[#484644]">
              <svg width="20" height="20" viewBox="0 0 20 20" fill="none"><circle cx="12" cy="8" r="5.5" stroke="#484644" strokeWidth="1.2" /><path d="M8 12l-6 6" stroke="#484644" strokeWidth="1.3" /></svg>
              <span className="ml-[11px] text-[16px] pt-[1px]">Search</span>
            </div>
          </div>
          <div className="mt-[6px] h-[1px] bg-[#b3b0ad] shrink-0" />
          <div className="pl-[10px] pr-0">
            <div className="h-[52px] flex items-center text-[14px] text-[#323130] justify-between pr-[14px] pt-[17px] pb-[9px]">
              <span>Filters on this visual</span>
              <span className="tracking-[1.5px] -mt-[2px]">...</span>
            </div>
            {['Fare Q1', 'Fare Q3', 'Fare Range', 'Mean Fare', 'Median Fare', 'Mode Fare'].map((n) => <FilterCard key={n} name={n} />)}
            <div className="h-[57px] mr-[10px] mt-[0.5px] bg-white border border-[#c8c6c4] rounded-[3px] flex items-center justify-center text-[14px] text-[#323130]">Add data fields here</div>
            <div className="h-[65px] flex items-end pb-[11px] justify-between text-[14px] text-[#323130] pr-[14px]">
              <span>Filters on this page</span>
              <span className="tracking-[1.5px]">...</span>
            </div>
            <div className="h-[40px] mr-[10px] border border-[#c8c6c4] rounded-[3px]" />
          </div>
          <div className="absolute right-0 top-[115px] w-[6px] h-[524px] rounded-full bg-[#8a8886]" />
        </div>

        {/* visualizations */}
        <div className="w-[226px] shrink-0 bg-[#f3f2f1] flex flex-col relative overflow-hidden">
          <div className="h-[50px] flex items-center pl-[11px] pt-[1px] shrink-0">
            <span className="text-[18.5px] font-semibold text-[#252423] whitespace-nowrap w-[189px]">Visualizations</span>
            <Dbl />
          </div>
          <div className="h-[16px] pl-[11px] text-[14px] leading-[16px] font-semibold text-[#252423] shrink-0">Build visual</div>
          <div className="h-[55px] shrink-0 mt-[6px] flex pl-[10px] items-start">
            <div className="w-[40px] h-[40px] bg-[#c8c6c4] rounded-[2px] flex items-center justify-center">
              <svg width="30" height="30" viewBox="0 0 30 30" fill="none"><path d="M3 2h24" stroke="#252423" strokeWidth="1" /><rect x="2" y="6" width="26" height="9" fill="#117865" stroke="#252423" strokeDasharray="2 1" /><rect x="2" y="19" width="26" height="9" fill="#117865" stroke="#252423" strokeDasharray="2 1" /></svg>
            </div>
            <svg className="ml-[53px] mt-[6px]" width="28" height="30" viewBox="0 0 28 30" fill="none"><path d="M1 28V14h7V3h9v12M8 14v8" stroke="#3b3a39" strokeWidth="1.3" /><path d="M27 12L14 22c-2 0-4 2-4 6-1 0-3 0-4-1 3 2 9 2 11-2l2-4z" fill="#f3f2f1" stroke="#3b3a39" strokeWidth="1.2" /></svg>
            <svg className="ml-[50px] mt-[5px]" width="32" height="32" viewBox="0 0 32 32" fill="none"><circle cx="14" cy="14" r="12.5" stroke="#252423" strokeWidth="1.5" /><path d="M3 15l6-5 6 4 9-7" stroke="#252423" strokeWidth="1.2" /><path d="M8 16v8M12 16v10M16 17v9M20 15v8" stroke="#252423" strokeWidth="1.2" /><path d="M23 23l7 7" stroke="#252423" strokeWidth="2.4" /></svg>
          </div>
          <div className="relative h-[1px] bg-[#8a8886] shrink-0">
            <div className="absolute left-[24px] -top-[6px] w-[13px] h-[13px] rotate-45 bg-[#f3f2f1] border-l border-t border-[#8a8886]" />
          </div>
          <div className="pl-[8px] pt-[8px] grid grid-cols-[repeat(6,35px)] auto-rows-[35px] shrink-0">
            {vizIcons.map((ic, i) => (
              <div key={i} className="flex items-center justify-center">
                {i === 37 ? <div className="w-[30px] h-[30px] border border-[#252423] flex items-center justify-center"><I24>{ic}</I24></div> : <I24>{ic}</I24>}
              </div>
            ))}
          </div>
          <div className="h-[23px] pl-[16px] text-[16px] leading-[16px] tracking-[2px] text-[#252423] shrink-0">...</div>
          <div className="h-[1px] bg-[#e1dfdd] mt-[1px] shrink-0" />
          <div className="h-[38px] shrink-0 flex items-center pl-[16px] pt-[5px] text-[14px] text-[#323130]">Data</div>
          <div className="mx-[6px] w-[213px] h-[194px] bg-white border border-dashed border-[#b3b0ad] p-[4px] pr-[3px] shrink-0">
            <Pill name="Mean Fare" mb="mb-[3px]" />
            <Pill name="Median Fare" mb="mb-[3px]" />
            <Pill name="Mode Fare" mb="mb-[3px]" />
            <Pill name="Fare Range" mb="mb-[3px]" />
            <Pill name="Fare Q3" mb="mb-[3px]" />
            <Pill name="Fare Q1" mb="" />
          </div>
          <div className="h-[42px] flex items-center pl-[15px] pt-[8px] text-[14px] text-[#323130] shrink-0">Categories</div>
          <div className="mx-[6px] w-[213px] h-[33px] bg-white border border-dashed border-[#b3b0ad] flex items-center pl-[13px] text-[14px] text-[#323130] shrink-0">Add data fields here</div>
          <div className="h-[42px] flex items-center pl-[15px] pt-[8px] text-[14px] text-[#323130] shrink-0">Tooltips</div>
          <div className="mx-[6px] w-[213px] h-[9px] bg-white border-t border-x border-dashed border-[#b3b0ad] shrink-0" />
          <div className="absolute left-[218px] top-[424px] w-[7px] h-[238px] rounded-full bg-[#8a8886]" />
        </div>

        {/* data */}
        <div className="flex-1 bg-[#f3f2f1] border-l border-[#d2d0ce] flex flex-col overflow-hidden min-w-0">
          <div className="h-[50px] flex items-center pl-[10px] pt-[1px] shrink-0">
            <span className="text-[18px] font-semibold text-[#252423] w-[189px]">Data</span>
            <Dbl />
          </div>
          <div className="pl-[5px] mt-[8px] shrink-0">
            <div className="w-[214px] h-[29px] bg-white border border-[#c8c6c4] rounded-[3px] border-b-[#8a8886] flex items-center pl-[14px] text-[16px] text-[#605e5c]">
              <svg width="18" height="18" viewBox="0 0 18 18" fill="none"><circle cx="7.5" cy="7.5" r="6" stroke="#605e5c" strokeWidth="1.2" /><path d="M12 12l5 5" stroke="#605e5c" strokeWidth="1.2" /></svg>
              <span className="ml-[9px]">Search</span>
            </div>
          </div>
          <div className="h-[12px] shrink-0" />
          <div className="h-[30px] flex items-center text-[14px] text-[#323130] shrink-0">
            <ChevronDown size={17} strokeWidth={1.1} className="ml-[15px] text-[#484644]" />
            <span className="relative ml-[4px] w-[20px] h-[20px]">
              <svg width="17" height="17" viewBox="0 0 17 17" fill="none"><rect x="1" y="1" width="15" height="15" rx="3" stroke="#484644" strokeWidth="1.2" /><path d="M1 6h15M1 11h15M6 1v15M11 1v15" stroke="#484644" /></svg>
              <span className="absolute left-[8px] top-[7px] w-[15px] h-[15px] rounded-full bg-[#117865] flex items-center justify-center">
                <svg width="9" height="9" viewBox="0 0 9 9" fill="none"><path d="M1 5l2 2 5-5" stroke="#fff" strokeWidth="1.4" /></svg>
              </span>
            </span>
            <span className="ml-[1px]">uber_cleaned</span>
          </div>
          {rows.map((x) => <Row key={x[0]} name={x[0]} icon={x[1]} checked={x[2]} expand={x[3]} />)}
        </div>
      </div>

      {/* status */}
      <div className="h-[29px] shrink-0 bg-[#f3f2f1] border-t border-[#e1dfdd] flex items-center text-[14px] text-[#484644]">
        <span className="ml-[5px]">Page 1 of 1</span>
        <span className="ml-auto font-bold text-[#484644] w-[9px]">-</span>
        <div className="relative w-[125px] h-[1.5px] bg-[#605e5c]">
          <div className="absolute left-[60px] -top-[6px] w-[5px] h-[13px] bg-[#605e5c]" />
        </div>
        <span className="ml-[6px] w-[27px] text-[18px] font-semibold text-[#484644] leading-none">+</span>
        <span className="w-[52px] text-[#605e5c]">100%</span>
        <svg width="20" height="16" viewBox="0 0 20 16" fill="none" className="mr-[21px]"><rect x=".5" y=".5" width="19" height="15" stroke="#8a8886" /><path d="M3 6V3h4M13 3h4v3M3 10v3h4M17 10v3h-4" stroke="#484644" /></svg>
      </div>

      {/* taskbar */}
      <div className="h-[60px] shrink-0 bg-[#1c1c1c] border-t-[2px] border-black flex text-white pl-[602px]">
        <Task>
          <svg width="30" height="30" viewBox="0 0 30 30"><defs><linearGradient id="wn" x1="0" y1="0" x2="1" y2="1"><stop offset="0" stopColor="#7fe3ff" /><stop offset="1" stopColor="#0f8ef0" /></linearGradient></defs><path d="M0 1h14v14H0zM16 1h14v14H16zM0 17h14v13H0zM16 17h14v13H16z" fill="url(#wn)" /></svg>
        </Task>
        <Task>
          <svg width="30" height="30" viewBox="0 0 30 30"><rect x="1" y="10" width="22" height="20" rx="2" fill="#555" /><rect x="8" y="1" width="21" height="21" rx="2" fill="#f2f2f2" /><rect x="8" y="10" width="15" height="12" fill="#9a9a9a" /></svg>
        </Task>
        <Task dot>
          <svg width="32" height="32" viewBox="0 0 32 32"><defs><linearGradient id="eg" x1="0" y1="0" x2="1" y2="1"><stop offset="0" stopColor="#35c1f1" /><stop offset=".6" stopColor="#2aa0dc" /><stop offset="1" stopColor="#62d94c" /></linearGradient></defs><circle cx="16" cy="16" r="15.5" fill="url(#eg)" /><path d="M4 12c-4 10 2 19 13 19 3 0 5-1 7-2-8 2-15-2-14-9 0-3 5-6 9-6 5 0 7 3 6 6h6c0-9-7-14-14-14-6 0-11 3-13 6z" fill="#0c59a4" opacity=".85" /></svg>
        </Task>
        <Task>
          <svg width="16" height="30" viewBox="0 0 16 30"><circle cx="12" cy="5" r="4" fill="#ff7262" /><rect x="0" y="1" width="8" height="8" rx="4" fill="#f24e1e" /><rect x="0" y="9" width="8" height="8" rx="4" fill="#a259ff" /><circle cx="12" cy="13" r="4" fill="#1abcfe" /><path d="M4 17h4v5a4 4 0 1 1-4-5z" fill="#0acf83" /></svg>
        </Task>
        <Task dot>
          <svg width="32" height="32" viewBox="0 0 32 32"><path d="M23 1l8 4v22l-8 4-13-12-6 5-3-2v-12l3-2 6 5z" fill="#0a78d0" /><path d="M23 9l-8 7 8 7z" fill="#1c1c1c" /><path d="M4 11l3 5-3 5z" fill="#1c1c1c" /></svg>
        </Task>
        <Task dot><Chrome badge="a" /></Task>
        <Task dot>
          <svg width="32" height="30" viewBox="0 0 32 30"><path d="M1 2h11l3 4h16v3H1z" fill="#e0a526" /><path d="M1 7h30v23H1z" fill="#ffd34f" /><rect x="6" y="22" width="20" height="8" fill="#0a78d0" /><path d="M11 25h10" stroke="#bde0fb" strokeWidth="1.4" /></svg>
        </Task>
        <Task dot>
          <svg width="28" height="34" viewBox="0 0 28 34"><path d="M11 1h6l7 27H4z" fill="#f7f7f7" /><path d="M9 9h10l2 7H7zM6 20h16l2 8H4z" fill="#f57c00" /><path d="M2 28h24l2 5H0z" fill="#f57c00" /></svg>
        </Task>
        <div className="w-[50px] h-[50px] mt-[4px] mx-[2.5px] rounded-[4px] bg-[#7b474c] flex flex-col items-center shrink-0">
          <svg className="mt-[9px]" width="28" height="32" viewBox="0 0 28 32"><ellipse cx="14" cy="16" rx="13.5" ry="15.5" fill="#f58220" /><path d="M4 7C8 0 22 0 25 9L14 11z" fill="#7c5ce0" /><path d="M4 25c5 8 18 7 22-4l-10 4z" fill="#f5c518" /><path d="M14 8l6 2v6c0 4-3 6-6 8-3-2-6-4-6-8v-6z" fill="#fff" /><circle cx="14" cy="14" r="2" fill="#444" /><rect x="13" y="14" width="2" height="5" fill="#444" /></svg>
          <div className="w-[40px] h-[4px] rounded-full bg-[#ff9aa8] mt-[2px]" />
        </div>
        <Task dot><Chrome badge="b" /></Task>
        <Task dot>
          <svg width="30" height="28" viewBox="0 0 30 28"><rect width="30" height="28" rx="3" fill="#3c3c3c" /><rect width="30" height="6" fill="#9a9a9a" /><path d="M5 10l7 5-7 5" stroke="#eee" strokeWidth="2" fill="none" /><path d="M14 22h9" stroke="#eee" strokeWidth="2" /></svg>
        </Task>
        <div className="w-[48px] h-[50px] mt-[4px] ml-[3.5px] rounded-[4px] bg-[#2b2b2b] flex flex-col items-center shrink-0">
          <svg className="mt-[9px]" width="24" height="32" viewBox="0 0 24 32"><rect y="14" width="10" height="18" rx="1" fill="#f2d966" /><rect x="7" y="8" width="10" height="24" rx="1" fill="#f2c811" /><rect x="14" y="0" width="10" height="32" rx="1" fill="#d9a514" /></svg>
          <div className="w-[18px] h-[4px] rounded-full bg-[#4cc2ff] mt-[2px]" />
        </div>
        <div className="flex-1 flex items-center pl-[424px] pb-[2px]">
          <svg width="14" height="10" viewBox="0 0 14 10" fill="none"><path d="M1 8l6-6 6 6" stroke="#fff" strokeWidth="1.6" /></svg>
          <svg className="ml-[22px]" width="20" height="16" viewBox="0 0 20 16" fill="none"><path d="M1 6c5-6 13-6 18 0M4 9c4-4 8-4 12 0M7 12c2-2 4-2 6 0" stroke="#fff" strokeWidth="1.3" /><circle cx="10" cy="14.5" r="1.3" fill="#fff" /></svg>
          <svg className="ml-[10px]" width="20" height="18" viewBox="0 0 20 18" fill="none"><path d="M1 6h4l5-4v14l-5-4H1z" stroke="#fff" strokeWidth="1.2" /><path d="M13 6c1 2 1 4 0 6" stroke="#fff" strokeWidth="1.2" /><path d="M16 3c2 4 2 8 0 12" stroke="#666" strokeWidth="1.2" /></svg>
          <svg className="ml-[9px]" width="21" height="16" viewBox="0 0 21 16" fill="none"><path d="M5 3h12a2 2 0 0 1 2 2v6a2 2 0 0 1-2 2H3a2 2 0 0 1-2-2V6" stroke="#fff" strokeWidth="1.2" /><path d="M5 0L2 6h3l-2 5" stroke="#fff" strokeWidth="1.2" /><rect x="19" y="6" width="2" height="4" fill="#fff" /></svg>
          <div className="ml-auto mr-[22px] text-right text-[14px] leading-[20px] whitespace-nowrap">
            <div>9:35 AM</div>
            <div>7/27/2025</div>
          </div>
        </div>
      </div>
    </div>
  );
}
